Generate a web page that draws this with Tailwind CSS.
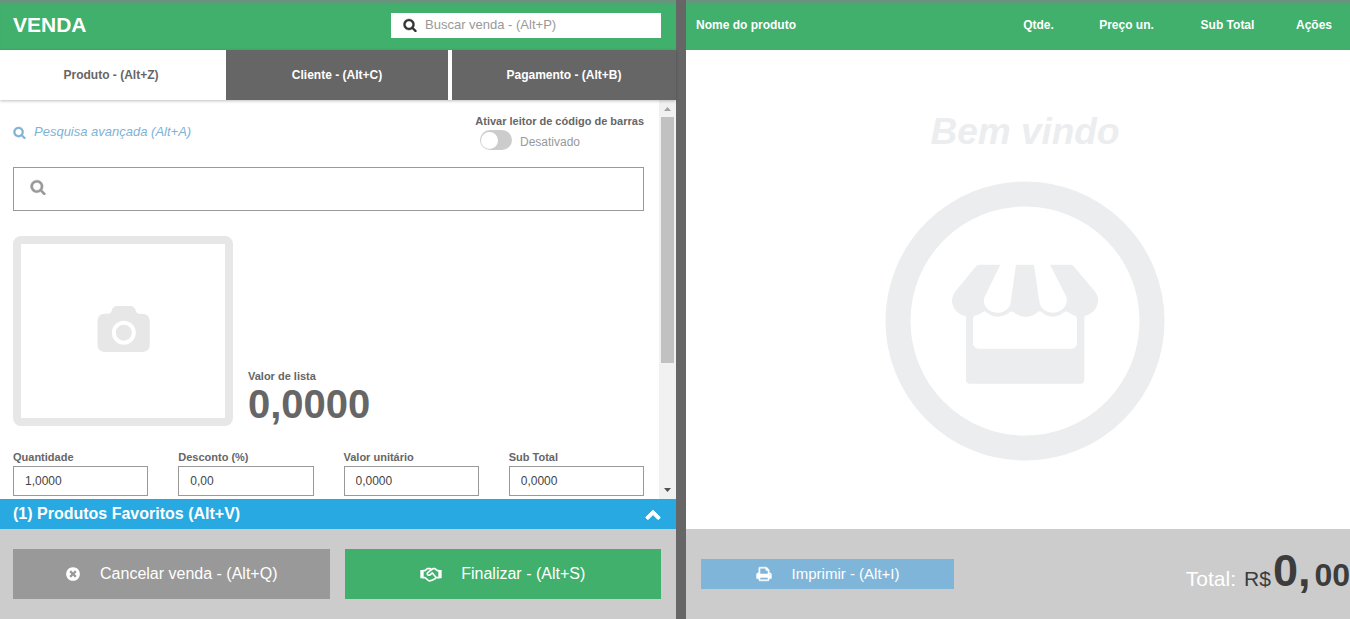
<!DOCTYPE html>
<html lang="pt-BR">
  <head>
    <meta charset="UTF-8" />
    <meta name="viewport" content="width=device-width, initial-scale=1.0" />
    <title>Venda</title>
    <script src="https://cdn.jsdelivr.net/npm/@tailwindcss/browser@4"></script>
  </head>
  <body class="bg-white font-['Liberation_Sans',Arial,sans-serif] text-[#666]">
    <!-- shared icons -->
    <svg class="hidden">
      <symbol id="icon-search" viewBox="0 0 1792 1792">
        <path stroke="currentColor" stroke-width="50" d="M1216 832q0-185-131.5-316.5t-316.5-131.5-316.5 131.5-131.5 316.5 131.5 316.5 316.5 131.5 316.5-131.5 131.5-316.5zm512 832q0 52-38 90t-90 38q-54 0-90-38l-343-342q-179 124-399 124-143 0-273.5-55.5t-225-150-150-225-55.5-273.5 55.5-273.5 150-225 225-150 273.5-55.5 273.5 55.5 225 150 150 225 55.5 273.5q0 220-124 399l343 343q37 37 37 90z" />
      </symbol>
    </svg>

    <div class="grid h-screen grid-cols-[676fr_10px_664fr] overflow-hidden">
      <!-- left: sale form -->
      <section class="flex min-h-0 min-w-0 flex-col">
        <header class="flex h-[50px] shrink-0 items-center justify-between bg-[#40b06c] pr-[15px] pl-[13px] shadow-[inset_0_5px_3px_-2px_#6f9180]">
          <h1 class="text-[21px] font-bold text-white">VENDA</h1>
          <label class="flex h-[25px] w-[270px] items-center gap-2 bg-white pl-3 text-[#333]">
            <svg class="size-[14px] shrink-0 fill-current"><use href="#icon-search" /></svg>
            <input type="text" aria-label="Buscar venda" placeholder="Buscar venda - (Alt+P)" class="w-full min-w-0 text-[13px] outline-none placeholder:text-[#999]" />
          </label>
        </header>

        <nav class="relative z-10 grid h-[50px] shrink-0 grid-cols-[226fr_226fr_224fr] bg-white text-xs font-bold shadow-[0_1px_3px_rgba(0,0,0,0.25)]">
          <button type="button" class="border-r-4 border-white bg-white">Produto - (Alt+Z)</button>
          <button type="button" class="border-r-4 border-white bg-[#666] text-white">Cliente - (Alt+C)</button>
          <button type="button" class="bg-[#666] text-white">Pagamento - (Alt+B)</button>
        </nav>

        <div class="flex min-h-0 flex-1">
          <form class="min-w-0 flex-1 overflow-hidden pt-[14px] pr-[15px] pl-[13px]">
            <div class="flex items-center justify-between">
              <a href="#" class="flex items-center gap-2 text-[13px] text-[#7fb3d5] italic">
                <svg class="size-[13px] fill-current"><use href="#icon-search" /></svg>
                Pesquisa avançada (Alt+A)
              </a>
              <label class="flex w-[164px] cursor-pointer flex-col">
                <span class="self-end text-[11px] leading-[14px] font-bold whitespace-nowrap">Ativar leitor de código de barras</span>
                <span class="mt-0.5 flex h-5 items-center gap-2 text-xs text-[#999]">
                  <input type="checkbox" class="peer sr-only" />
                  <span class="flex h-5 w-8 items-center rounded-full bg-[#ccc] px-px peer-checked:justify-end peer-checked:bg-[#40b06c]">
                    <span class="size-[17px] rounded-full bg-white"></span>
                  </span>
                  <span class="pt-1">Desativado</span>
                </span>
              </label>
            </div>

            <label class="mt-[17px] flex h-11 items-center gap-2 border border-[#999] px-4 pb-1 text-[#999]">
              <svg class="size-4 shrink-0 fill-current"><use href="#icon-search" /></svg>
              <input type="text" aria-label="Buscar produto" class="w-full min-w-0 text-sm text-[#333] outline-none" />
            </label>

            <div class="mt-[25px] flex items-end gap-[15px]">
              <div class="flex h-[190px] w-[220px] items-center justify-center rounded-lg border-8 border-[#e7e7e7] pb-1">
                <svg class="h-[46px] w-[53px]" viewBox="290 243 158 138">
                  <path fill="#e7e7e7" d="M313 266h12q6 0 8-7 3-16 17-16h39q13 0 17 14 2 9 9 9h9q24 0 24 24v67q0 24-24 24H314q-23 0-23-24v-67q0-24 22-24z" />
                  <circle cx="370" cy="323" r="30" fill="#e7e7e7" stroke="#fff" stroke-width="12" />
                </svg>
              </div>
              <div>
                <p class="text-[11px] leading-[14px] font-bold">Valor de lista</p>
                <p class="text-[40px] leading-[43px] font-bold">0,0000</p>
              </div>
            </div>

            <div class="mt-6 grid grid-cols-4 gap-x-[30px] text-[11px] leading-[14px] font-bold">
              <label class="min-w-0">Quantidade
                <input type="text" value="1,0000" class="mt-0.5 block h-[30px] w-full border border-[#999] px-[11px] text-xs font-normal text-[#444]" />
              </label>
              <label class="min-w-0">Desconto (%)
                <input type="text" value="0,00" class="mt-0.5 block h-[30px] w-full border border-[#999] px-[11px] text-xs font-normal text-[#444]" />
              </label>
              <label class="min-w-0">Valor unitário
                <input type="text" value="0,0000" class="mt-0.5 block h-[30px] w-full border border-[#999] px-[11px] text-xs font-normal text-[#444]" />
              </label>
              <label class="min-w-0">Sub Total
                <input type="text" value="0,0000" class="mt-0.5 block h-[30px] w-full border border-[#999] px-[11px] text-xs font-normal text-[#444]" />
              </label>
            </div>
          </form>

          <!-- scrollbar -->
          <div class="flex w-[17px] flex-col items-center bg-[#f1f1f1]">
            <svg class="size-[17px] shrink-0" viewBox="0 0 17 17"><path fill="#a3a3a3" d="M5 11h7L8.500 7z" /></svg>
            <div class="h-[246px] w-[13px] bg-[#c1c1c1]"></div>
            <svg class="mt-auto size-[17px] shrink-0" viewBox="0 0 17 17"><path fill="#505050" d="M5 6h7L8.500 10z" /></svg>
          </div>
        </div>

        <button type="button" class="flex h-[30px] shrink-0 items-center justify-between bg-[#29a9e1] pr-[15px] pl-[13px] font-bold text-white">
          (1) Produtos Favoritos (Alt+V)
          <svg class="size-4 fill-current" viewBox="0 0 1792 1792">
            <path stroke="currentColor" stroke-width="110" stroke-linejoin="round" d="M1683 1331l-166 165q-19 19-45 19t-45-19l-531-531-531 531q-19 19-45 19t-45-19l-166-165q-19-19-19-45.500t19-45.500l742-741q19-19 45-19t45 19l742 741q19 19 19 45.500t-19 45.500z" />
          </svg>
        </button>

        <footer class="grid h-[90px] shrink-0 grid-cols-2 gap-[15px] bg-[#ccc] py-5 pr-[15px] pl-[13px] text-white">
          <button type="button" class="flex items-center justify-center gap-[19px] bg-[#999]">
            <svg class="size-4 fill-current" viewBox="0 0 1792 1792">
              <path d="M1277 1122q0-26-19-45l-181-181 181-181q19-19 19-45 0-27-19-46l-90-90q-19-19-46-19-26 0-45 19l-181 181-181-181q-19-19-45-19-27 0-46 19l-90 90q-19 19-19 46 0 26 19 45l181 181-181 181q-19 19-19 45 0 27 19 46l90 90q19 19 46 19 26 0 45-19l181-181 181 181q19 19 45 19 27 0 46-19l90-90q19-19 19-46zm387-226q0 209-103 385.500t-279.500 279.500-385.500 103-385.500-103-279.500-279.500-103-385.500 103-385.500 279.500-279.500 385.500-103 385.500 103 279.500 279.500 103 385.500z" />
            </svg>
            Cancelar venda - (Alt+Q)
          </button>
          <button type="button" class="flex items-center justify-center gap-[19px] bg-[#40b06c]">
            <svg class="h-[15px] w-[22px]" viewBox="0 0 66 45">
              <path fill="#fff" d="M1 9h10v25H1zM55 9h10v25h-10z" />
              <path fill="none" stroke="#fff" stroke-width="5" stroke-linejoin="round" stroke-linecap="round" d="M10 11h5l7-6h9l4 3 4-3h6l7 6h5M10 32h5l10 8q4 3 8 0 5 1 8-3 5 0 6-5h9M35 8l-12 9q-3 4 1 7 4 2 7-1l6-5 11 13" />
            </svg>
            Finalizar - (Alt+S)
          </button>
        </footer>
      </section>

      <div class="bg-[#666]"></div>

      <!-- right: sale items -->
      <section class="flex min-h-0 min-w-0 flex-col">
        <table class="h-[50px] w-full shrink-0 table-fixed bg-[#40b06c] text-xs text-white shadow-[inset_0_5px_3px_-2px_#6f9180]">
          <thead>
            <tr>
              <th class="pl-[10px] text-left">Nome do produto</th>
              <th class="w-[75px]">Qtde.</th>
              <th class="w-[101px]">Preço un.</th>
              <th class="w-[101px]">Sub Total</th>
              <th class="w-[72px]">Ações</th>
            </tr>
          </thead>
        </table>

        <div class="flex min-h-0 flex-1 flex-col items-center overflow-hidden pt-[61px] pl-[14px]">
          <p class="text-[37px] leading-[42px] font-bold text-[#ecedef] italic">Bem vindo</p>
          <svg class="mt-7 size-[280px] shrink-0" viewBox="45 244 840 840">
            <circle cx="465" cy="664" r="381" fill="none" stroke="#ecedef" stroke-width="75" />
            <!-- storefront -->
            <path fill="#ecedef" d="M328 495h63l-47 96q-7 18 4 32 13 16 34 16 24 0 36-18 4-8 5-20l15-106h54l15 106q2 16 9 24 13 14 32 14 25 0 38-20 8-14 2-30l-48-94h61q6 0 10 5l65 77q12 16 7 34-5 29-40 39v190q0 12-12 12H300q-12 0-12-12V650q-34-8-41-38-4-18 7-34l63-77q5-6 11-6z" />
            <path fill="#fff" d="M339 636q5-3 9 1 17 14 35 14 20 0 37-14 5-4 11 0 15 14 36 14t36-14q6-4 11 0 16 14 35 14 18 0 34-14 5-4 9-1l17 10q12 4 12 12v74q0 5-4 9t-10 6H324q-7-2-11-6t-4-9v-74q0-8 9-11 12-3 21-11z" />
            <path fill="#ecedef" d="M420 637q5-4 11 0 15 14 36 14t36-14l-10-20h-56z" />
          </svg>
        </div>

        <footer class="flex h-[90px] shrink-0 items-center justify-between bg-[#ccc] pl-[15px]">
          <button type="button" class="flex h-[30px] w-[39%] items-center justify-center gap-5 bg-[#7fb5d9] text-[15px] text-white">
            <svg class="size-4 fill-current" viewBox="0 0 1792 1792">
              <path stroke="currentColor" stroke-width="60" d="M448 1536h896v-256h-896v256zm0-640h896v-384h-160q-40 0-68-28t-28-68v-160h-640v640zm1152 64q0-26-19-45t-45-19-45 19-19 45 19 45 45 19 45-19 19-45zm128 0v416q0 13-9.500 22.500t-22.500 9.500h-224v160q0 40-28 68t-68 28h-960q-40 0-68-28t-28-68v-160h-224q-13 0-22.500-9.500t-9.500-22.500v-416q0-79 56.500-135.500t135.500-56.500h64v-544q0-40 28-68t68-28h672q40 0 88 20t76 48l152 152q28 28 48 76t20 88v256h64q79 0 135.500 56.500t56.500 135.500z" />
            </svg>
            Imprimir - (Alt+I)
          </button>
          <p class="flex items-baseline pt-0.5 text-[21px] leading-[50px] text-[#3c3c3c]">
            <span class="mr-2 text-white">Total:</span>
            <span class="mr-0.5">R$</span>
            <strong class="mr-1 text-[45px]">0,</strong>
            <strong class="text-[32px]">00</strong>
          </p>
        </footer>
      </section>
    </div>
  </body>
</html>
